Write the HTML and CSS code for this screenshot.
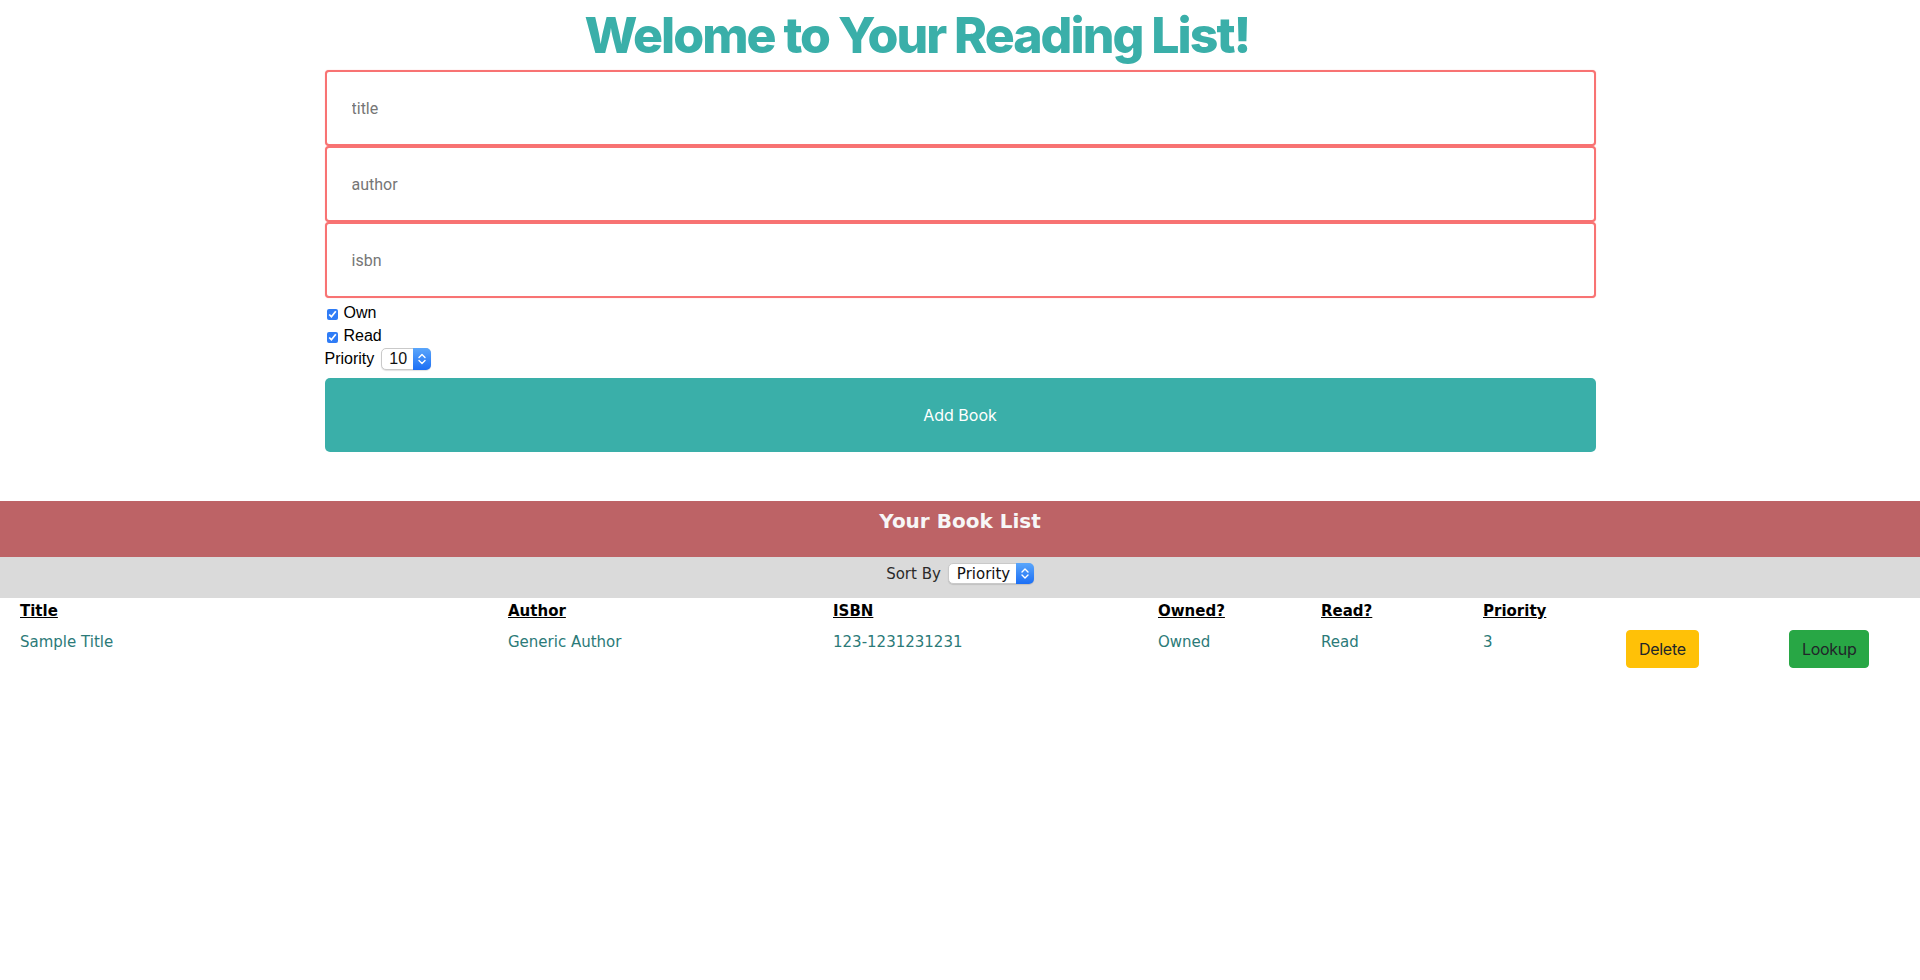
FILE: index.html
```html
<!DOCTYPE html>
<html lang="en">
<head>
<meta charset="utf-8">
<title>Reading List</title>
<link rel="stylesheet" href="styles.css">
</head>
<body>
<h1 class="title">Welome to Your Reading List!</h1>
<form class="book-form">
  <input class="field" type="text" placeholder="title">
  <input class="field" type="text" placeholder="author">
  <input class="field" type="text" placeholder="isbn">
  <div class="options">
    <label class="check-row"><input class="check" type="checkbox" checked><span>Own</span></label>
    <label class="check-row"><input class="check" type="checkbox" checked><span>Read</span></label>
    <div class="priority-row">
      <span>Priority</span>
      <span class="mac-select small">
        <select class="mac-select-box">
          <option>10</option>
        </select>
        <span class="stepper">
          <svg width="18" height="22" viewBox="0 0 18 22"><polyline points="6,9.5 9,6.5 12,9.5" fill="none" stroke="#fff" stroke-width="1.4" stroke-linecap="round" stroke-linejoin="round"/><polyline points="6,12.5 9,15.5 12,12.5" fill="none" stroke="#fff" stroke-width="1.4" stroke-linecap="round" stroke-linejoin="round"/></svg>
        </span>
      </span>
    </div>
  </div>
  <button class="add-btn" type="button">Add Book</button>
</form>

<section class="book-list">
  <h2 class="band">Your Book List</h2>
  <div class="sort-bar">
    <span>Sort By</span>
    <span class="mac-select sort">
      <select class="mac-select-box">
        <option>Priority</option>
      </select>
      <span class="stepper">
        <svg width="18" height="21" viewBox="0 0 18 21"><polyline points="6,9 9,6 12,9" fill="none" stroke="#fff" stroke-width="1.4" stroke-linecap="round" stroke-linejoin="round"/><polyline points="6,12 9,15 12,12" fill="none" stroke="#fff" stroke-width="1.4" stroke-linecap="round" stroke-linejoin="round"/></svg>
      </span>
    </span>
  </div>
  <div class="book-grid">
    <div class="th">Title</div>
    <div class="th">Author</div>
    <div class="th">ISBN</div>
    <div class="th">Owned?</div>
    <div class="th">Read?</div>
    <div class="th">Priority</div>
    <div class="th"></div>
    <div class="th"></div>

    <div class="td">Sample Title</div>
    <div class="td">Generic Author</div>
    <div class="td">123-1231231231</div>
    <div class="td">Owned</div>
    <div class="td">Read</div>
    <div class="td">3</div>
    <div class="td-btn"><button class="btn btn-delete" type="button">Delete</button></div>
    <div class="td-btn"><button class="btn btn-lookup" type="button">Lookup</button></div>
  </div>
</section>
</body>
</html>
```

FILE: styles.css
```css
* { box-sizing: border-box; }

body {
  margin: 0;
  background: #ffffff;
  font-family: "Liberation Sans", Arial, sans-serif;
  color: #000;
}

.title {
  margin: 5px 0 5px;
  padding-right: 86px;
  font-family: Inter, "Liberation Sans", sans-serif;
  font-weight: 800;
  font-size: 50px;
  line-height: 60px;
  letter-spacing: -2px;
  text-align: center;
  color: #3aafa9;
}

.book-form {
  width: 1271px;
  margin: 0 auto;
  display: flex;
  flex-direction: column;
}

.field {
  display: block;
  width: 100%;
  height: 76px;
  margin: 0;
  padding: 0 25px;
  border: 2px solid #f87373;
  border-radius: 4px;
  box-shadow: 0 0 1px rgba(255, 80, 80, 0.5);
  font-family: Roboto, "Liberation Sans", sans-serif;
  font-size: 16px;
  color: #222;
  background: #fff;
  outline: none;
}

.field::placeholder { color: #767676; }

.options {
  margin-top: 3px;
  display: flex;
  flex-direction: column;
  font-size: 16px;
}

.check-row {
  display: flex;
  align-items: center;
  height: 23px;
}

.check {
  width: 11px;
  height: 11px;
  margin: 3px 6px 0 2px;
  accent-color: #2f7cf6;
}

.priority-row {
  display: flex;
  align-items: center;
  gap: 7px;
  height: 23px;
}

.mac-select {
  position: relative;
  display: inline-flex;
}

.mac-select-box {
  appearance: none;
  -webkit-appearance: none;
  margin: 0;
  border: 1px solid #c9c9c9;
  border-radius: 5px;
  background: #fff;
  box-shadow: 0 1px 1px rgba(0, 0, 0, 0.12);
  color: #111;
  outline: none;
}

.mac-select.small .mac-select-box {
  width: 50px;
  height: 22px;
  padding: 0 0 0 7px;
  font-family: "Liberation Sans", Arial, sans-serif;
  font-size: 16px;
}

.mac-select.sort .mac-select-box {
  width: 86px;
  height: 21px;
  padding: 0 0 0 8px;
  font-family: "DejaVu Sans", Verdana, sans-serif;
  font-size: 15px;
}

.stepper {
  position: absolute;
  top: 0;
  right: 0;
  bottom: 0;
  width: 18px;
  display: flex;
  border-radius: 0 5px 5px 0;
  background: linear-gradient(#5aa6fb, #1c6ff5);
}

.add-btn {
  margin-top: 8px;
  height: 74px;
  border: none;
  border-radius: 5px;
  background: #3aafa9;
  color: #ffffff;
  font-family: Inter, "Liberation Sans", sans-serif;
  font-size: 16px;
}

.book-list {
  margin-top: 49px;
  font-family: "DejaVu Sans", Verdana, sans-serif;
}

.band {
  margin: 0;
  padding: 8px 0 24px;
  background: #bd6366;
  color: #f7f7f7;
  font-family: "DejaVu Sans", Verdana, sans-serif;
  font-weight: 700;
  font-size: 20px;
  line-height: 24px;
  text-align: center;
}

.sort-bar {
  display: flex;
  align-items: center;
  justify-content: center;
  gap: 7px;
  height: 41px;
  padding: 6px 0 14px;
  background: #dadada;
  color: #2a2a2a;
  font-size: 15px;
}

.book-grid {
  display: grid;
  grid-template-columns: 488px 325px 325px 163px 162px 143px 163px auto;
  row-gap: 10px;
  margin-top: 4px;
  padding: 0 20px;
  font-size: 15px;
  line-height: 18px;
}

.th {
  font-weight: 700;
  text-decoration: underline;
  color: #000;
}

.td {
  padding-top: 3px;
  color: #2b7a78;
}

.btn {
  height: 38px;
  padding: 6px 12px;
  border: 1px solid transparent;
  border-radius: 4px;
  font-family: Inter, "Liberation Sans", sans-serif;
  font-size: 16px;
  line-height: 24px;
  letter-spacing: -0.3px;
  color: #212529;
}

.btn-delete { background: #ffc107; border-color: #ffc107; }
.btn-lookup { background: #28a745; border-color: #28a745; }
```
